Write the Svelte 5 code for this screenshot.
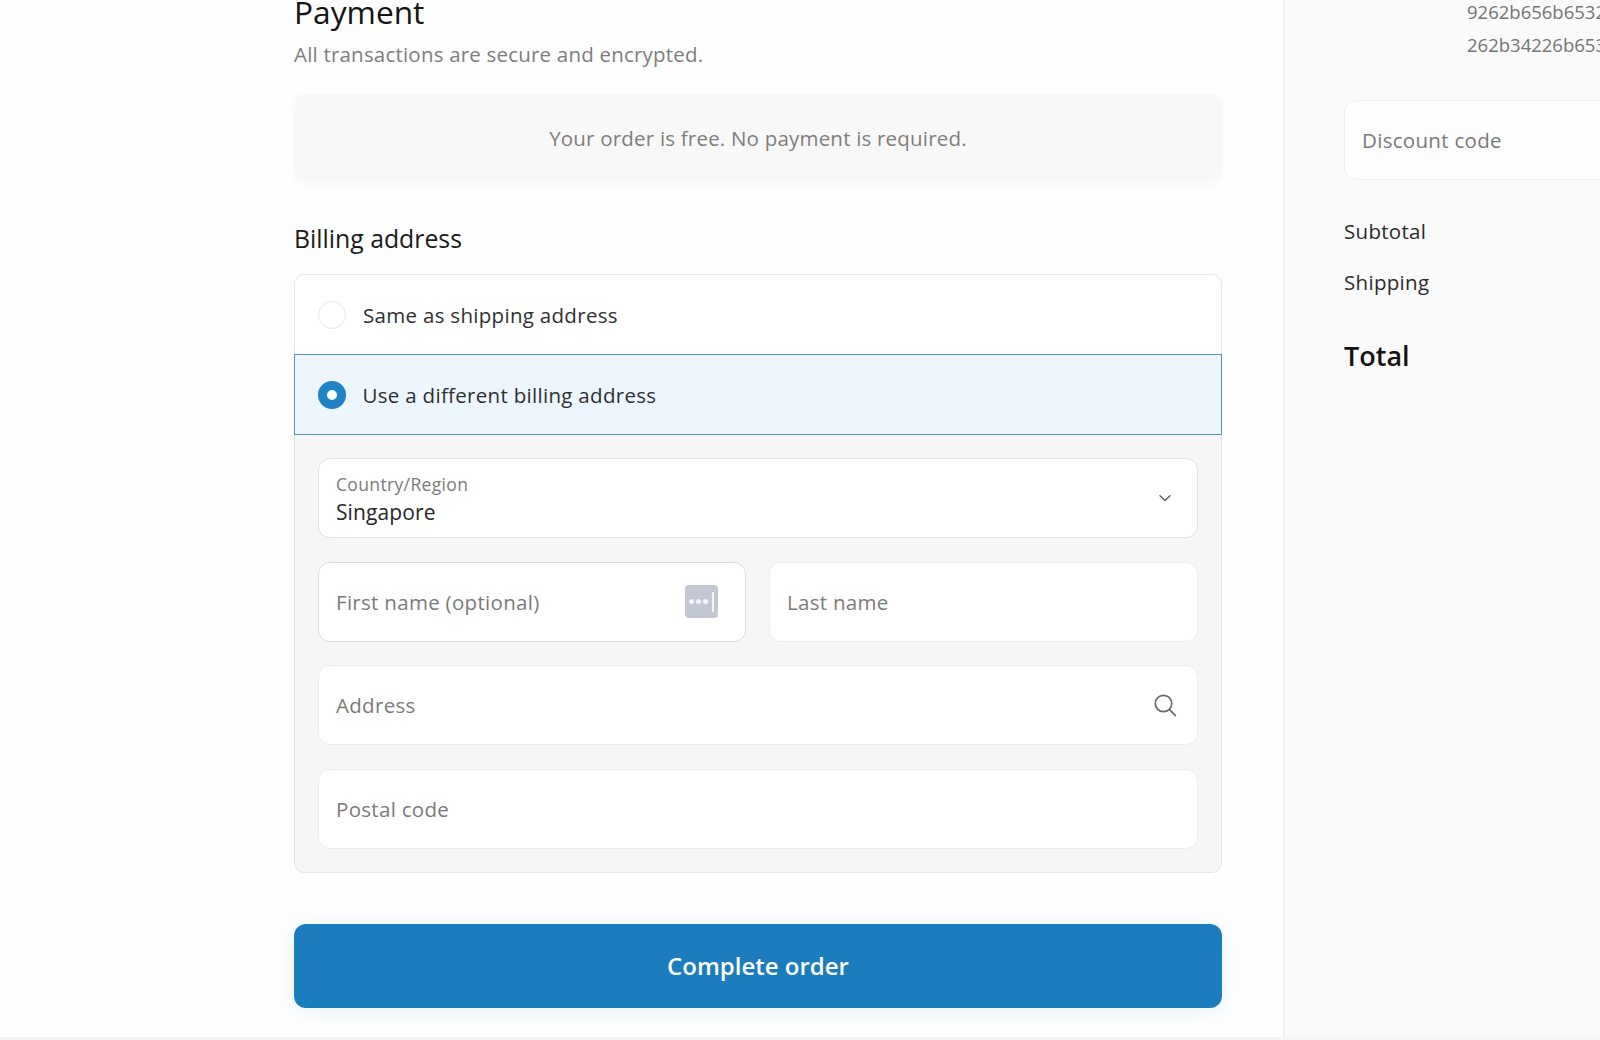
<script>
	const fields = [
		{ label: 'Address', icon: 'search' },
		{ label: 'Postal code', icon: null }
	];
</script>

<div class="page">
	<main class="main">
		<section class="payment">
			<h2 class="title">Payment</h2>
			<p class="sub">All transactions are secure and encrypted.</p>
			<div class="notice">Your order is free. No payment is required.</div>
		</section>

		<section class="billing">
			<h3 class="heading">Billing address</h3>
			<div class="group">
				<div class="option">
					<span class="radio"></span>
					<span>Same as shipping address</span>
				</div>
				<div class="option selected">
					<span class="radio on"></span>
					<span>Use a different billing address</span>
				</div>
				<div class="form">
					<div class="field select">
						<div class="select-text">
							<span class="small">Country/Region</span>
							<span class="value">Singapore</span>
						</div>
						<svg class="chevron" width="14" height="14" viewBox="0 0 14 14" fill="none" stroke="#5c5c5c" stroke-width="1.4" stroke-linecap="round" stroke-linejoin="round">
							<path d="M2 4.8 7 9.6 12 4.8" />
						</svg>
					</div>
					<div class="row">
						<div class="field first">
							<span class="placeholder">First name (optional)</span>
							<span class="keys">
								<i></i><i></i><i></i><b></b>
							</span>
						</div>
						<div class="field">
							<span class="placeholder">Last name</span>
						</div>
					</div>
					{#each fields as f (f.label)}
						<div class="field">
							<span class="placeholder">{f.label}</span>
							{#if f.icon === 'search'}
								<svg class="search" width="24" height="24" viewBox="0 0 24 24" fill="none" stroke="#6b6b6b" stroke-width="1.7" stroke-linecap="round">
									<circle cx="10.5" cy="10.5" r="8.2" />
									<path d="M16.6 16.6 22.4 22.6" />
								</svg>
							{/if}
						</div>
					{/each}
				</div>
			</div>
		</section>

		<button class="complete" type="button">Complete order</button>
	</main>

	<aside class="side">
		<div class="hash">
			<div>9262b656b6532</div>
			<div>262b34226b653</div>
		</div>
		<div class="discount"><span class="placeholder">Discount code</span></div>
		<div class="line">Subtotal</div>
		<div class="line">Shipping</div>
		<div class="total">Total</div>
	</aside>
</div>
<div class="foot"></div>

<style>
	:global(body) {
		margin: 0;
		background: #fff;
		font-family: "Open Sans", "Noto Sans", sans-serif;
		overflow: hidden;
	}

	.page {
		display: flex;
		height: 1037px;
		overflow: hidden;
	}

	.main {
		width: 1285px;
		box-sizing: border-box;
		flex: none;
		padding: 0 61px 0 294px;
		background: #fefefe;
		border-right: 2px solid #f1f1f1;
		display: flex;
		flex-direction: column;
	}

	.title {
		margin: -8px 0 0;
		font-size: 31.7px;
		line-height: 40px;
		font-weight: 500;
		color: #141414;
	}

	.sub {
		margin: 9px 0 0;
		font-size: 20.5px;
		letter-spacing: 0.2px;
		line-height: 27px;
		color: #7d7d7d;
	}

	.notice {
		margin-top: 26px;
		height: 88px;
		display: flex;
		align-items: center;
		justify-content: center;
		font-size: 20.5px;
		letter-spacing: 0.2px;
		color: #7e7e7e;
		background: #f8f8f8;
		border-radius: 10px;
		box-shadow: 0 3px 12px #f9f9f9;
	}

	.heading {
		margin: 40px 0 0;
		font-size: 24.8px;
		line-height: 32px;
		font-weight: 500;
		color: #1a1a1a;
	}

	.group {
		margin-top: 20px;
		border: 1px solid #e6e6e6;
		border-radius: 10px;
		background: #f6f6f6;
	}

	.option {
		height: 79px;
		box-sizing: border-box;
		display: flex;
		align-items: center;
		gap: 17px;
		padding: 0 23px;
		font-size: 20.5px;
		letter-spacing: 0.3px;
		color: #2f2f2f;
		background: #fff;
		border-radius: 10px 10px 0 0;
	}

	.option.selected {
		height: 81px;
		background: #edf6fd;
		border: 1.5px solid #5a92b8;
		border-radius: 0;
		margin: 0 -1px;
		padding: 0 22.5px;
	}

	.radio {
		width: 28px;
		height: 28px;
		box-sizing: border-box;
		border: 1px solid #e6e6e6;
		border-radius: 50%;
		background: #fff;
		flex: none;
	}

	.radio.on {
		border: 9px solid #1f84c6;
	}

	.form {
		padding: 23px 23px 23px;
		display: flex;
		flex-direction: column;
		gap: 23.5px;
	}

	.row {
		display: flex;
		gap: 23px;
	}

	.row .field {
		flex: 1;
	}

	.row .first {
		flex: none;
		width: 428px;
		border-color: #dcdcdc;
	}

	.field {
		height: 80px;
		box-sizing: border-box;
		display: flex;
		align-items: center;
		justify-content: space-between;
		padding: 0 17px;
		background: #fff;
		border: 1px solid #ececec;
		border-radius: 12px;
	}

	.select {
		border-color: #e2e2e2;
	}

	.select-text {
		display: flex;
		flex-direction: column;
		padding-top: 2px;
	}

	.small {
		font-size: 17.5px;
		letter-spacing: 0.35px;
		line-height: 24px;
		color: #7a7a7a;
	}

	.value {
		margin-top: 2px;
		font-size: 21px;
		letter-spacing: 0.1px;
		line-height: 28px;
		color: #262626;
	}

	.chevron {
		margin-right: 8px;
	}

	.search {
		margin-right: 3px;
	}

	.placeholder {
		font-size: 20.5px;
		letter-spacing: 0.3px;
		color: #7a7a7a;
	}

	.keys {
		width: 33px;
		height: 33px;
		margin-right: 10px;
		border-radius: 4px;
		background: #c3c7d1;
		display: flex;
		align-items: center;
		justify-content: center;
		gap: 2px;
	}

	.keys i {
		width: 5px;
		height: 5px;
		border-radius: 50%;
		background: #f4f5f7;
	}

	.keys b {
		width: 2px;
		height: 20px;
		margin-left: 2px;
		background: #f4f5f7;
	}

	.complete {
		margin-top: 51px;
		height: 84px;
		width: 100%;
		border: none;
		border-radius: 12px;
		background: #1b7cbe;
		color: #fff;
		font-family: inherit;
		font-size: 24px;
		font-weight: 600;
		box-shadow: 0 3px 22px rgba(27, 124, 190, 0.1);
	}

	.side {
		flex: 1;
		min-width: 0;
		padding-left: 59px;
		background: #fafafa;
		overflow: hidden;
	}

	.hash {
		margin-left: 123px;
		font-size: 18.5px;
		line-height: 33px;
		color: #757575;
		white-space: nowrap;
		margin-top: -5px;
	}

	.discount {
		margin-top: 39px;
		width: 400px;
		height: 80px;
		box-sizing: border-box;
		display: flex;
		align-items: center;
		padding: 0 17px;
		background: #fdfdfd;
		border: 1px solid #f0f0f0;
		border-radius: 12px;
	}

	.line {
		font-size: 20.5px;
		letter-spacing: 0.3px;
		line-height: 28px;
		color: #2c2c2c;
		margin-top: 23px;
	}

	.discount + .line {
		margin-top: 37px;
	}

	.total {
		margin-top: 40px;
		font-size: 27px;
		line-height: 40px;
		font-weight: 600;
		color: #141414;
	}

	.foot {
		height: 3px;
		background: #f5f5f5;
	}
</style>
